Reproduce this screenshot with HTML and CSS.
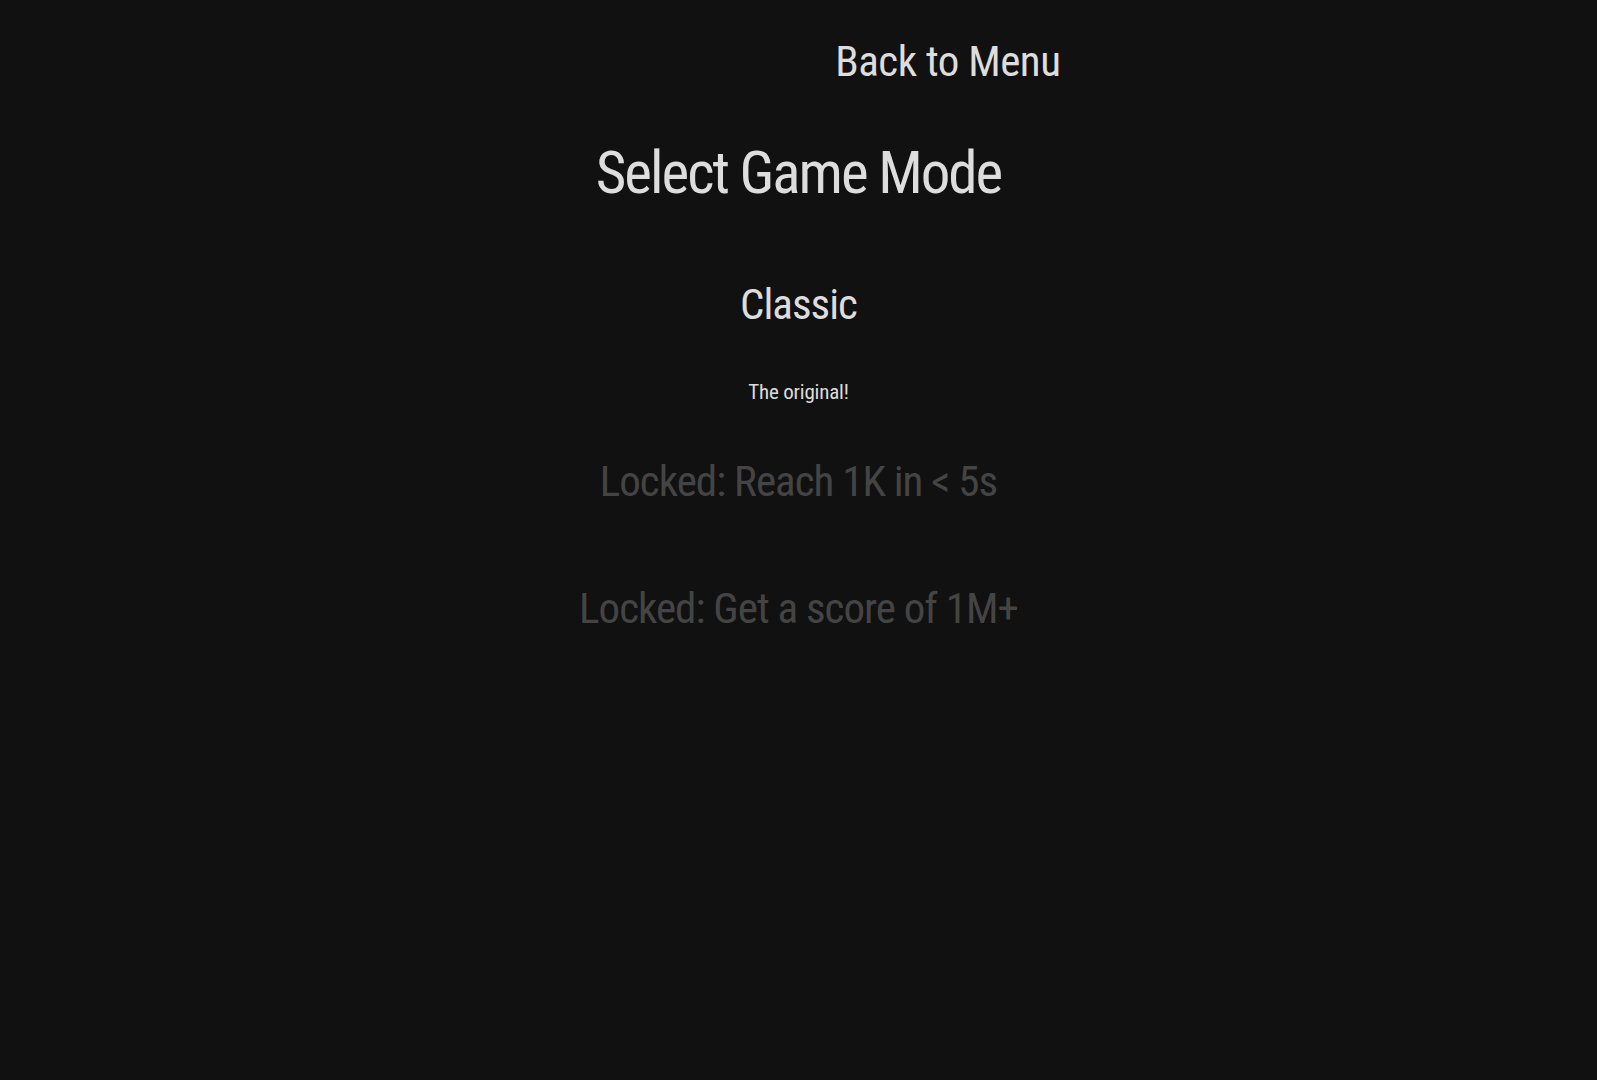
FILE: index.html
```html
<!DOCTYPE html>
<html lang="en">
<head>
<meta charset="utf-8">
<title>Select Game Mode</title>
<link rel="stylesheet" href="styles.css">
</head>
<body>
  <div class="page">
    <header class="topbar">
      <button class="back-btn">Back to Menu</button>
    </header>
    <h1 class="title">Select Game Mode</h1>
    <ul class="modes">
      <li class="mode">
        <div class="mode-name">Classic</div>
        <div class="mode-desc">The original!</div>
      </li>
      <li class="mode mode-locked">
        <div class="mode-name">Locked: Reach 1K in &lt; 5s</div>
      </li>
      <li class="mode mode-locked">
        <div class="mode-name">Locked: Get a score of 1M+</div>
      </li>
    </ul>
  </div>
</body>
</html>
```
FILE: styles.css
```css
html, body {
  margin: 0;
  padding: 0;
  background: #111111;
  min-height: 100%;
}

body {
  font-family: "Roboto Condensed", "DejaVu Sans Condensed", sans-serif;
  color: #dddddd;
}

.page {
  width: 524px;
  margin: 0 auto;
  display: flex;
  flex-direction: column;
  align-items: center;
}

.topbar {
  align-self: stretch;
  display: flex;
  justify-content: flex-end;
  padding-top: 36px;
}

.back-btn {
  background: none;
  border: none;
  padding: 0;
  font-family: inherit;
  color: #dddddd;
  font-size: 43px;
  line-height: 50px;
  letter-spacing: -0.5px;
  cursor: pointer;
}

.title {
  margin: 52px 0 0;
  font-size: 59px;
  line-height: 70px;
  font-weight: normal;
  letter-spacing: -2px;
  color: #dddddd;
}

.modes {
  list-style: none;
  margin: 68px 0 0;
  padding: 0;
  display: flex;
  flex-direction: column;
  align-items: center;
}

.mode {
  display: flex;
  flex-direction: column;
  align-items: center;
  margin-bottom: 71px;
}

.mode:first-child {
  margin-bottom: 46px;
}

.mode-name {
  font-size: 43px;
  line-height: 56px;
  letter-spacing: -1px;
  white-space: nowrap;
}

.mode-desc {
  margin-top: 45px;
  font-size: 21px;
  line-height: 30px;
  letter-spacing: -0.2px;
}

.mode-locked {
  color: #444444;
}
```
